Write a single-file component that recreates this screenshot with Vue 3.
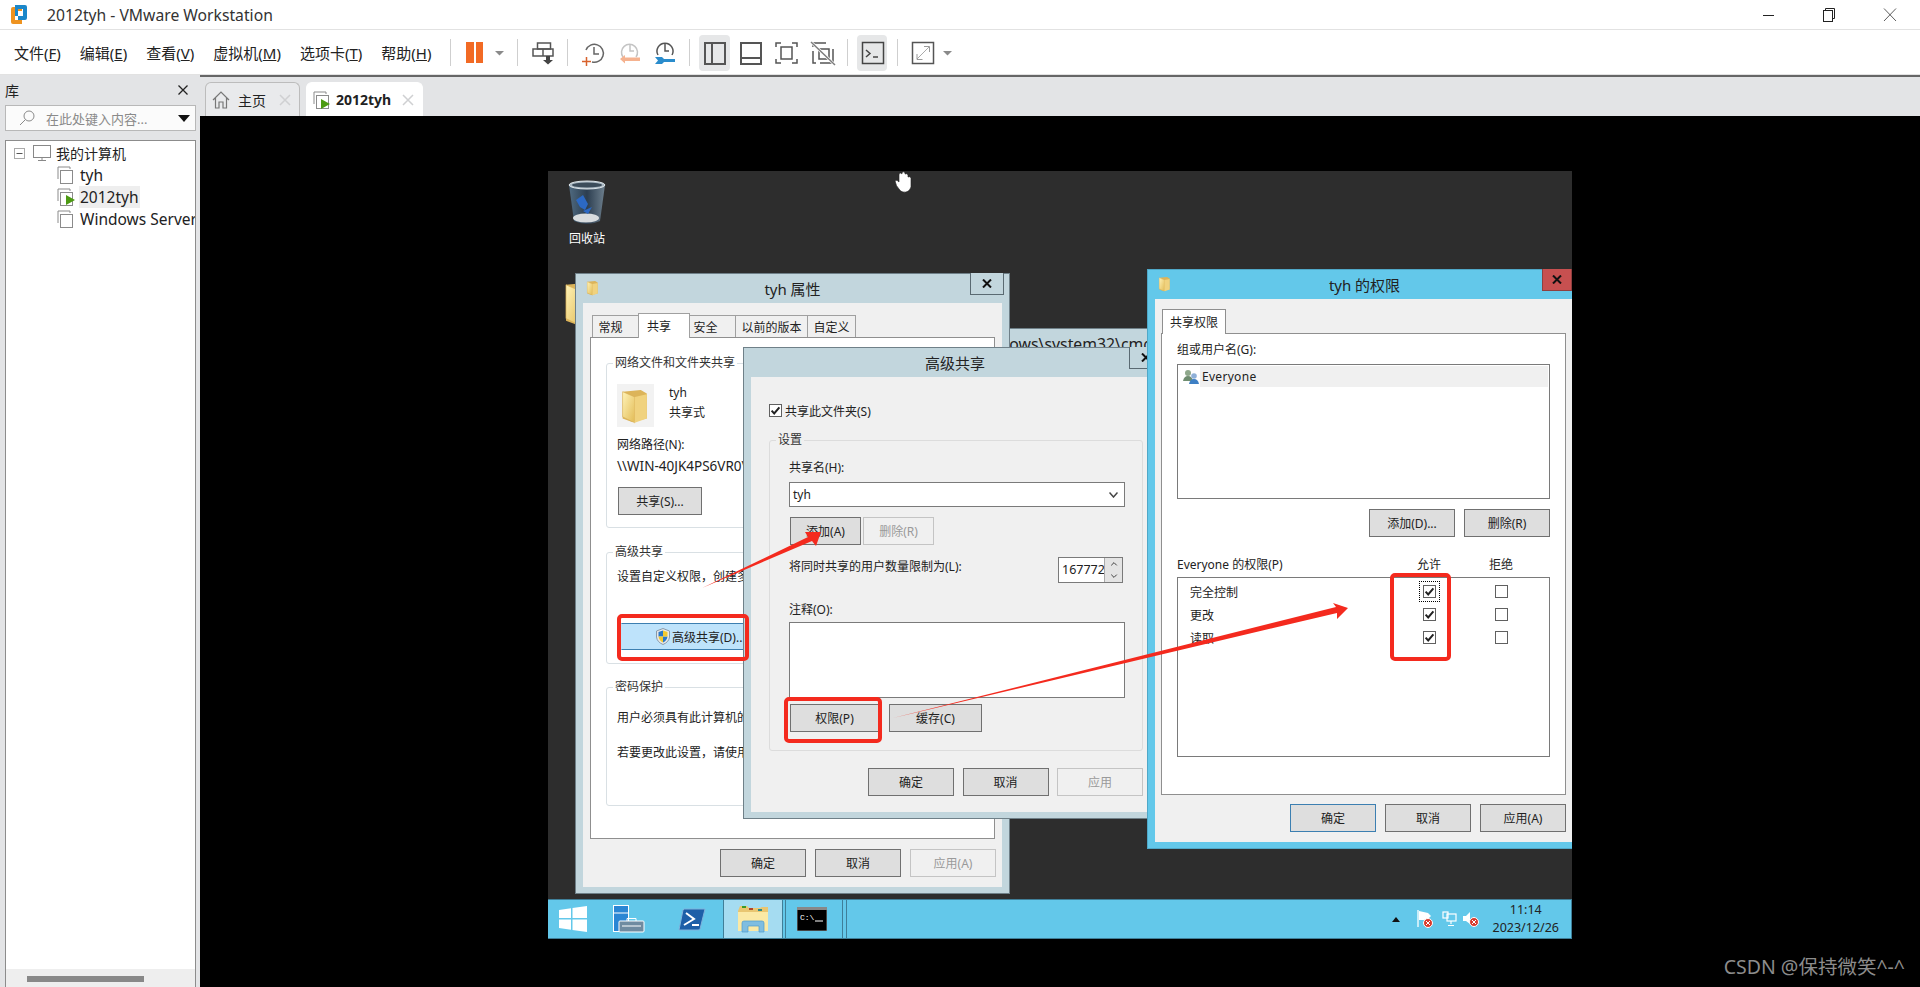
<script setup>
const menus = [
  ['文件', 'F'], ['编辑', 'E'], ['查看', 'V'], ['虚拟机', 'M'], ['选项卡', 'T'], ['帮助', 'H']
]
const tree = [
  { name: 'tyh' },
  { name: '2012tyh', running: true },
  { name: 'Windows Server 2012' }
]
const perms = [
  { name: '完全控制', focus: true },
  { name: '更改' },
  { name: '读取' }
]
</script>

<template>
  <div class="app">
    <!-- shared icon shapes -->
    <svg class="defs" width="0" height="0">
      <defs>
        <linearGradient id="fold" x1="0" y1="0" x2="1" y2="1">
          <stop offset="0" stop-color="#fff3b8" />
          <stop offset="1" stop-color="#e2bb55" />
        </linearGradient>
        <symbol id="folder" viewBox="0 0 37 43">
          <path d="M3 5 L24 3 L31 7 V36 L14 40 L3 36 Z" fill="#dcb45a" />
          <path d="M3 5 L17 11 V41 L3 34 Z" fill="url(#fold)" stroke="#d6ae55" stroke-width=".6" />
          <path d="M17 11 L31 8 V36 L17 41 Z" fill="#f0d27e" />
        </symbol>
        <symbol id="vm" viewBox="0 0 16 18">
          <path d="M1 13 V1 H13 V3" fill="none" stroke="#8b8b8b" />
          <rect x="3.5" y="4.5" width="12" height="13" fill="#fff" stroke="#8b8b8b" />
        </symbol>
        <symbol id="tick" viewBox="0 0 13 13">
          <path d="M2.6 6.6 L5.2 9.4 L10.4 3.4" fill="none" stroke="#222" stroke-width="2" />
        </symbol>
      </defs>
    </svg>

    <header class="titlebar">
      <svg class="logo" width="18" height="22" viewBox="0 0 18 22">
        <path d="M1 5 a2 2 0 0 1 2-2 H12 V7 H5 V16 H12 V20 H3 a2 2 0 0 1-2-2 Z" fill="#ee9320" />
        <path d="M5 1 H15 a2 2 0 0 1 2 2 V14 a2 2 0 0 1-2 2 H8 V12 H13 V5 H8 V12 H5 Z" fill="#1c87c9" />
      </svg>
      <span class="app-title">2012tyh - VMware Workstation</span>
      <div class="win-controls">
        <svg width="12" height="12" viewBox="0 0 12 12"><path d="M0 6.5 H11" stroke="#222" /></svg>
        <svg width="14" height="14" viewBox="0 0 14 14">
          <path d="M3.5 2.5 V0.5 H12.5 V10.5 H10.5" fill="none" stroke="#222" />
          <rect x="1.5" y="2.5" width="9" height="11" fill="#fff" stroke="#222" />
        </svg>
        <svg width="14" height="14" viewBox="0 0 14 14"><path d="M1 0.5 L13 13 M13 0.5 L1 13" stroke="#333" stroke-width=".8" /></svg>
      </div>
    </header>

    <nav class="toolbar">
      <div class="menus">
        <span v-for="m in menus" :key="m[0]">{{ m[0] }}(<u>{{ m[1] }}</u>)</span>
      </div>
      <svg class="tools" width="510" height="45" viewBox="450 29 510 45">
        <g stroke="#cfcfcf">
          <path d="M450.500 38 V65 M517.500 38 V65 M567.500 38 V65 M689.500 38 V65 M847.500 38 V65 M897.500 38 V65" />
        </g>
        <rect x="466" y="41" width="8" height="21" fill="#f26a24" />
        <rect x="476" y="41" width="7" height="21" fill="#f26a24" />
        <path d="M495 50 H504 L499.500 54.500 Z" fill="#8a8a8a" />
        <g fill="none" stroke="#555" stroke-width="1.5">
          <rect x="537.500" y="42" width="13" height="6" />
          <rect x="533" y="48" width="20" height="7" />
          <path d="M543 48 V55" />
        </g>
        <path d="M546 55 H550 V59 H553 L548 63.500 L543 59 H546 Z" fill="#444" />
        <g fill="none" stroke="#666" stroke-width="1.5">
          <path d="M586 49 A9 9 0 1 1 592 61" />
          <path d="M594 46 V53 H599" />
        </g>
        <path d="M586.500 56 V65 M582 60.500 H591" stroke="#d8622c" stroke-width="1.500" />
        <g fill="none" stroke="#c4c4c4" stroke-width="1.500">
          <path d="M623 56 A8 8 0 1 1 636 56" />
          <path d="M630 43 V50 H634" />
        </g>
        <path d="M620 58 L625 54 V56.500 H640 V60 H625 V62.500 Z" fill="#f5b28f" />
        <g fill="none" stroke="#555" stroke-width="1.500">
          <path d="M658 54 A8 8 0 1 1 672 54" />
          <path d="M665 43 V50 H669" />
        </g>
        <path d="M655 56 H662 L664 58 H675 V61 H664 L662 63 H655 L658 59.500 Z" fill="#2a8ccc" />

        <rect x="699" y="34" width="31" height="36" rx="4" fill="#e6e7e8" />
        <g fill="none" stroke="#555" stroke-width="2">
          <rect x="705" y="42" width="20" height="21" />
          <path d="M712 42 V63" />
          <rect x="741" y="42" width="20" height="21" />
          <path d="M741 57 H761" />
        </g>
        <g fill="none" stroke="#555" stroke-width="1.500">
          <path d="M776 46 V42 H781 M792 42 H797 V46 M797 58 V62 H792 M781 62 H776 V58" />
          <rect x="781" y="46" width="11" height="12" />
          <path d="M813 46 V42 H826 M833 48 V62 H820 M813 50 V62 H816" />
          <rect x="819" y="48" width="10" height="10" />
        </g>
        <path d="M811 41 L835 64" stroke="#fff" stroke-width="3" />
        <path d="M811 41 L835 64" stroke="#7d7d7d" stroke-width="1.500" />

        <rect x="857" y="34" width="30" height="36" rx="4" fill="#e6e7e8" />
        <rect x="862.500" y="41.500" width="21" height="21" fill="none" stroke="#444" stroke-width="1.500" />
        <path d="M866 49 L870 52.500 L866 56" fill="none" stroke="#444" stroke-width="1.500" />
        <path d="M873 56 H878" stroke="#444" stroke-width="1.500" />

        <rect x="912.500" y="41.500" width="21" height="21" fill="none" stroke="#555" stroke-width="1.500" />
        <path d="M917 58 L929 46" stroke="#aaa" />
        <path d="M924 45.500 H929.500 V51 M917 53 V58.500 H922.500" fill="none" stroke="#999" />
        <path d="M943 50 H952 L947.500 54.500 Z" fill="#8a8a8a" />
      </svg>
    </nav>

    <div class="main">
      <aside class="sidebar">
        <div class="side-head">
          <span>库</span>
          <svg width="10" height="10" viewBox="0 0 10 10"><path d="M.5 .5 L9.500 9.500 M9.500 .5 L.5 9.500" stroke="#222" stroke-width="1.300" /></svg>
        </div>
        <div class="search">
          <svg width="16" height="16" viewBox="0 0 16 16" fill="none" stroke="#8a8a8a">
            <circle cx="10" cy="6" r="5" /><path d="M6.500 9.500 L1 15" />
          </svg>
          <span class="search-text">在此处键入内容...</span>
          <span class="search-arrow"></span>
        </div>
        <div class="tree">
          <div class="tree-root">
            <svg class="tree-toggle" width="11" height="11" viewBox="0 0 11 11">
              <rect x=".5" y=".5" width="10" height="10" fill="none" stroke="#aaa" /><path d="M2.500 5.500 H8.500" stroke="#555" />
            </svg>
            <svg width="18" height="17" viewBox="0 0 18 17" fill="none" stroke="#888">
              <rect x=".5" y=".5" width="17" height="12" /><path d="M9 13 V15 M5 15.500 H13" />
            </svg>
            <span>我的计算机</span>
          </div>
          <div v-for="t in tree" :key="t.name" class="tree-row">
            <svg class="vm-icon" width="16" height="18"><use href="#vm" /></svg>
            <svg v-if="t.running" class="play" width="9" height="10" viewBox="0 0 9 10"><path d="M0 0 L9 5 L0 10 Z" fill="#4c9a12" /></svg>
            <span class="tree-name" :class="{ sel: t.running }">{{ t.name }}</span>
          </div>
          <div class="tree-scroll"><div class="tree-thumb"></div></div>
        </div>
      </aside>

      <section class="content">
        <div class="tabs">
          <div class="vtab">
            <svg width="18" height="20" viewBox="0 0 18 20" fill="none" stroke="#777" stroke-width="1.200">
              <path d="M1 10 L9 2 L17 10 M3.500 8 V18 H7 V12 H11 V18 H14.500 V8" />
            </svg>
            <span class="vtab-name">主页</span>
            <svg class="vtab-x" width="12" height="12" viewBox="0 0 12 12"><path d="M1 1 L11 11 M11 1 L1 11" stroke="#cfd0d2" stroke-width="1.500" /></svg>
          </div>
          <div class="vtab active">
            <span class="vtab-icon">
              <svg width="16" height="18"><use href="#vm" /></svg>
              <svg class="play" width="9" height="10" viewBox="0 0 9 10"><path d="M0 0 L9 5 L0 10 Z" fill="#4c9a12" /></svg>
            </span>
            <span class="vtab-name bold">2012tyh</span>
            <svg class="vtab-x" width="12" height="12" viewBox="0 0 12 12"><path d="M1 1 L11 11 M11 1 L1 11" stroke="#cfd0d2" stroke-width="1.500" /></svg>
          </div>
        </div>

        <div class="screen">
          <div class="guest">
            <div class="desk-icon">
              <svg width="38" height="46" viewBox="0 0 38 46">
                <defs>
                  <linearGradient id="glass" x1="0" x2="1">
                    <stop offset="0" stop-color="#4f6a80" /><stop offset=".5" stop-color="#2c3e50" /><stop offset="1" stop-color="#6d7f8d" />
                  </linearGradient>
                </defs>
                <path d="M1 5 L6 41 Q19 47 32 41 L37 5 Z" fill="url(#glass)" />
                <ellipse cx="19" cy="5" rx="18" ry="4" fill="#a9b7c1" stroke="#dfe6ea" />
                <ellipse cx="19" cy="5" rx="15" ry="2.500" fill="#3c4c5a" />
                <ellipse cx="18" cy="38" rx="13" ry="4.500" fill="#d8dcde" />
                <path d="M8 20 L15 15 L20 24 L17 30 L12 27 Z M15 31 L24 27 L20 34 Z" fill="#2c69c4" />
              </svg>
              <span>回收站</span>
            </div>
            <svg class="behind-folder" width="44" height="50"><use href="#folder" /></svg>

            <div class="cmd-back">C:\Windows\system32\cmd.exe</div>

            <!-- tyh 属性 -->
            <div class="win win-props">
              <div class="win-title">
                <svg class="win-folder" width="14" height="16"><use href="#folder" /></svg>
                <span>tyh 属性</span>
                <div class="win-close"><svg width="10" height="9" viewBox="0 0 10 9"><path d="M1 .5 L9 8.500 M9 .5 L1 8.500" stroke="#111" stroke-width="2" /></svg></div>
              </div>
              <div class="win-body">
                <div class="ptabs">
                  <span class="ptab pt1">常规</span>
                  <span class="ptab pt2 on">共享</span>
                  <span class="ptab pt3">安全</span>
                  <span class="ptab pt4">以前的版本</span>
                  <span class="ptab pt5">自定义</span>
                </div>
                <div class="ppanel">
                  <div class="group g1">
                    <span class="legend">网络文件和文件夹共享</span>
                    <div class="share-row">
                      <div class="share-icon"><svg width="32" height="38"><use href="#folder" /></svg></div>
                      <div class="share-text"><div>tyh</div><div>共享式</div></div>
                    </div>
                    <div class="path-label">网络路径(N):</div>
                    <div class="path-value">\\WIN-40JK4PS6VR0\tyh</div>
                    <button class="btn share-btn">共享(S)...</button>
                  </div>
                  <div class="group g2">
                    <span class="legend">高级共享</span>
                    <div class="gtext">设置自定义权限，创建多个共享，并设置其他高级共享选项。</div>
                    <button class="adv-btn">
                      <svg width="14" height="17" viewBox="0 0 14 17">
                        <path d="M7 .5 L13.500 3 V9 Q13 14 7 16.500 Q1 14 .5 9 V3 Z" fill="#e8e8e8" stroke="#8a9aa8" />
                        <path d="M7 2.500 V8.500 H2.500 V4 Z M7 8.500 H11.500 Q11 12.500 7 14.500 Z" fill="#2a78c8" />
                        <path d="M7 2.500 L11.500 4 V8.500 H7 Z M7 8.500 V14.500 Q3 12.500 2.500 8.500 Z" fill="#f2c92f" />
                      </svg>
                      <span>高级共享(D)...</span>
                    </button>
                  </div>
                  <div class="group g3">
                    <span class="legend">密码保护</span>
                    <div class="gtext">用户必须具有此计算机的用户帐户和密码，才能访问共享文件夹。</div>
                    <div class="gtext second">若要更改此设置，请使用网络和共享中心。</div>
                  </div>
                </div>
                <div class="actions props-actions">
                  <button class="btn">确定</button>
                  <button class="btn">取消</button>
                  <button class="btn off">应用(A)</button>
                </div>
              </div>
            </div>

            <!-- 高级共享 -->
            <div class="win win-adv">
              <div class="win-title">
                <span class="adv-title">高级共享</span>
                <div class="win-close"><svg width="10" height="9" viewBox="0 0 10 9"><path d="M1 .5 L9 8.500 M9 .5 L1 8.500" stroke="#111" stroke-width="2" /></svg></div>
              </div>
              <div class="win-body adv-body">
                <label class="check-row">
                  <span class="chk"><svg width="13" height="13"><use href="#tick" /></svg></span>
                  <span>共享此文件夹(S)</span>
                </label>
                <div class="group settings">
                  <span class="legend grey">设置</span>
                  <div class="f-label first">共享名(H):</div>
                  <div class="select">
                    <span>tyh</span>
                    <svg width="9" height="6" viewBox="0 0 9 6"><path d="M.5 .5 L4.500 5 L8.500 .5" fill="none" stroke="#444" stroke-width="1.500" /></svg>
                  </div>
                  <div class="add-row">
                    <button class="btn add">添加(A)</button>
                    <button class="btn add off">删除(R)</button>
                  </div>
                  <div class="limit-row">
                    <span class="limit-label">将同时共享的用户数量限制为(L):</span>
                    <div class="spin">
                      <span class="spin-val">167772</span>
                      <div class="spin-btns">
                        <svg width="18" height="13" viewBox="0 0 18 13"><path d="M6 8 L9 5 L12 8" fill="none" stroke="#333" /></svg>
                        <svg width="18" height="13" viewBox="0 0 18 13"><path d="M6 5 L9 8 L12 5" fill="none" stroke="#333" /></svg>
                      </div>
                    </div>
                  </div>
                  <div class="f-label note">注释(O):</div>
                  <div class="note-box"></div>
                  <div class="perm-row">
                    <button class="btn perm">权限(P)</button>
                    <button class="btn cache">缓存(C)</button>
                  </div>
                </div>
                <div class="actions adv-actions">
                  <button class="btn">确定</button>
                  <button class="btn">取消</button>
                  <button class="btn off">应用</button>
                </div>
              </div>
            </div>

            <!-- tyh 的权限 -->
            <div class="win win-perm">
              <div class="win-title">
                <svg class="win-folder" width="14" height="16"><use href="#folder" /></svg>
                <span>tyh 的权限</span>
                <div class="win-close red"><svg width="10" height="9" viewBox="0 0 10 9"><path d="M1 .5 L9 8.500 M9 .5 L1 8.500" stroke="#111" stroke-width="2" /></svg></div>
              </div>
              <div class="win-body perm-body">
                <div class="ptab-single">共享权限</div>
                <div class="perm-panel">
                  <div class="f-label">组或用户名(G):</div>
                  <div class="user-list">
                    <div class="user-row">
                      <svg width="16" height="16" viewBox="0 0 16 16">
                        <circle cx="5" cy="4" r="3" fill="#8fa88c" /><path d="M0 12 Q1 7 5 7 Q9 7 10 12 Z" fill="#6f8d70" />
                        <circle cx="11" cy="7" r="2.800" fill="#8fb0d8" /><path d="M6 15 Q7 10 11 10 Q15 10 16 15 Z" fill="#3e7fc4" />
                      </svg>
                      <span class="user-name">Everyone</span>
                    </div>
                  </div>
                  <div class="actions list-actions">
                    <button class="btn">添加(D)...</button>
                    <button class="btn">删除(R)</button>
                  </div>
                  <div class="perm-grid perm-head">
                    <span>Everyone 的权限(P)</span>
                    <span class="mid">允许</span>
                    <span class="mid">拒绝</span>
                  </div>
                  <div class="perm-list">
                    <div v-for="p in perms" :key="p.name" class="perm-grid perm-item">
                      <span class="perm-name">{{ p.name }}</span>
                      <span class="mid"><span class="chk" :class="{ focus: p.focus }"><svg width="13" height="13"><use href="#tick" /></svg></span></span>
                      <span class="mid"><span class="chk"></span></span>
                    </div>
                  </div>
                </div>
                <div class="actions perm-actions">
                  <button class="btn def">确定</button>
                  <button class="btn">取消</button>
                  <button class="btn">应用(A)</button>
                </div>
              </div>
            </div>

            <!-- red marks drawn over the screenshot -->
            <svg class="marks" width="1024" height="768" viewBox="548 171 1024 768">
              <g fill="none" stroke="#f42a1e" stroke-width="4">
                <rect x="619" y="616" width="128" height="43" rx="3" />
                <rect x="786" y="699" width="94" height="42" rx="3" />
                <rect x="1392" y="575" width="57" height="84" rx="3" />
              </g>
              <g fill="#f42a1e">
                <polygon points="702,588 808,537 805,532 821,532 816,546 812,541" />
                <polygon points="893,718 1336,607 1333,603 1348,608 1337,619 1337,613" />
              </g>
              <path d="M899 189 Q896 186 895 181 Q897 179 899 182 V174 Q901 172 902 174 V172.500 Q904 171 905 173 V174 Q907 173 908 175 V177 Q910 176 911 178 V187 Q909 193 903 192 Q901 192 899 189 Z" fill="#fff" stroke="#222" stroke-width=".6" />
            </svg>

            <footer class="taskbar">
              <div class="task-slot start">
                <svg width="28" height="26" viewBox="0 0 28 26" fill="#fff">
                  <path d="M0 4 L12 2.200 V12 H0 Z M13.500 2 L28 0 V12 H13.500 Z M0 13.500 H12 V23.800 L0 22 Z M13.500 13.500 H28 V26 L13.500 24 Z" />
                </svg>
              </div>
              <div class="task-slot server">
                <svg width="32" height="28" viewBox="0 0 32 28">
                  <rect x=".5" y=".5" width="15" height="26" fill="#2a86d4" stroke="#fff" />
                  <path d="M1 8 H15" stroke="#fff" />
                  <rect x="6" y="16" width="25" height="11" rx="1" fill="#6f8ba0" stroke="#fff" />
                  <path d="M14 16 V13.500 H23 V16 M9 21 H28" fill="none" stroke="#fff" />
                </svg>
              </div>
              <div class="task-slot ps">
                <svg width="28" height="23" viewBox="0 0 28 23">
                  <path d="M6 1 H27 L22 21 Q22 22 20 22 H1 L5 2 Z" fill="#1d5fa8" stroke="#7fb2dc" />
                  <path d="M8 5 L16 11 L6 17 M14 17 H21" fill="none" stroke="#fff" stroke-width="2" />
                </svg>
              </div>
              <div class="task-slot explorer">
                <svg width="32" height="28" viewBox="0 0 32 28">
                  <path d="M1 6 L3 1 H10 L12 3 H23 L25 2 H31 V26 H1 Z" fill="#e9c671" />
                  <rect x="5" y="1" width="4" height="2" fill="#3a9a2a" /><rect x="12" y="3" width="4" height="2" fill="#b2452a" /><rect x="21" y="4" width="4" height="2" fill="#2a8a8a" />
                  <rect x="1" y="7" width="30" height="19" fill="#fbe9a5" />
                  <path d="M5 27 V18 Q5 16 7 16 H25 Q27 16 27 18 V27 H22 V21 H11 V27 Z" fill="#7fbde0" stroke="#4f9ccc" stroke-width=".7" />
                </svg>
              </div>
              <div class="task-slot cmd">
                <svg width="30" height="24" viewBox="0 0 30 24">
                  <rect width="30" height="24" fill="#000" stroke="#8a8a8a" />
                  <rect x="0" y="0" width="30" height="3" fill="#888" />
                  <text x="3" y="13" fill="#fff" font-size="8" font-family="Liberation Mono, monospace">C:\</text>
                  <path d="M18 14 H26" stroke="#fff" />
                </svg>
              </div>
              <div class="task-gap"></div>
              <div class="tray">
                <span class="tray-up"></span>
                <svg width="16" height="18" viewBox="0 0 16 18">
                  <path d="M1 0 V17" stroke="#fff" stroke-width="1.300" /><path d="M2 1 L11 3 L14 6 L10 10 H2 Z" fill="#fff" />
                  <circle cx="11" cy="13" r="4.500" fill="#d83a2c" stroke="#fff" /><path d="M9 11 L13 15 M13 11 L9 15" stroke="#fff" />
                </svg>
                <svg width="15" height="16" viewBox="0 0 15 16" fill="none" stroke="#fff" stroke-width="1.200">
                  <rect x="1" y="1" width="5" height="6" /><rect x="5" y="3" width="9" height="7" /><path d="M9 10 V13 M6 14.500 H12" />
                </svg>
                <svg class="tray-sound" width="17" height="16" viewBox="0 0 17 16">
                  <path d="M1 5 H4 L8 1 V13 L4 10 H1 Z" fill="#fff" /><circle cx="12" cy="11" r="4.500" fill="#d83a2c" stroke="#fff" />
                  <path d="M10 9 L14 13 M14 9 L10 13" stroke="#fff" />
                </svg>
                <div class="clock"><div>11:14</div><div>2023/12/26</div></div>
              </div>
            </footer>
          </div>
          <span class="watermark">CSDN @保持微笑^-^</span>
        </div>
      </section>
    </div>
  </div>
</template>

<style>
html, body { margin: 0; background: #000; overflow: hidden; }
</style>

<style scoped>
* { box-sizing: border-box; }
.app {
  width: 1920px;
  height: 987px;
  display: flex;
  flex-direction: column;
  overflow: hidden;
  background: #fff;
  color: #222;
  font-family: "Noto Sans", "Noto Sans CJK SC", sans-serif;
}
.defs { position: absolute; }

.titlebar { height: 29px; display: flex; align-items: center; padding-left: 10px; flex: none; }
.logo { flex: none; }
.app-title { margin-left: 19px; font-size: 15.7px; color: #333; }
.win-controls { margin-left: auto; display: flex; align-items: center; gap: 47px; padding-right: 23px; }

.toolbar {
  height: 46px;
  flex: none;
  display: flex;
  align-items: center;
  padding-left: 14px;
  border-top: 1px solid #e2e2e2;
  border-bottom: 1px solid #e2e2e2;
}
.menus { display: flex; gap: 19px; width: 422px; font-size: 15px; color: #222; white-space: nowrap; }
.tools { margin-left: 14px; flex: none; }

.main { flex: 1; display: flex; min-height: 0; }

.sidebar {
  width: 200px;
  flex: none;
  background: #e3e4e6;
  display: flex;
  flex-direction: column;
  padding: 0 4px 0 5px;
}
.side-head { height: 30px; flex: none; display: flex; align-items: center; justify-content: space-between; padding: 0 8px 0 0; font-size: 14px; }
.search {
  height: 26px;
  flex: none;
  background: #fbfbfb;
  border: 1px solid #b8b8b8;
  display: flex;
  align-items: center;
  padding-left: 13px;
  font-size: 13px;
  color: #8a8a8a;
}
.search-text { margin-left: 11px; white-space: nowrap; }
.search-arrow {
  margin-left: auto;
  margin-right: 5px;
  border-left: 6px solid transparent;
  border-right: 6px solid transparent;
  border-top: 7px solid #111;
}
.tree {
  margin-top: 9px;
  flex: 1;
  min-height: 0;
  background: #fff;
  border: 1px solid #8c8c8c;
  border-bottom: none;
  display: flex;
  flex-direction: column;
  font-size: 15.5px;
  color: #222;
  overflow: hidden;
}
.tree-root { height: 22px; margin-top: 1px; display: flex; align-items: center; padding-left: 8px; flex: none; }
.tree-toggle { margin-right: 8px; }
.tree-root span { margin-left: 5px; font-size: 14px; white-space: nowrap; }
.tree-row { height: 22px; position: relative; display: flex; align-items: center; padding-left: 51px; flex: none; white-space: nowrap; }
.vm-icon { flex: none; }
.play { position: absolute; left: 60px; top: 9px; }
.tree-name { margin-left: 6px; padding: 0 1px; line-height: 22px; }
.tree-name.sel { background: #eee; }
.tree-scroll { margin-top: auto; height: 18px; background: #eee; flex: none; padding-top: 7px; padding-left: 21px; }
.tree-thumb { width: 117px; height: 6px; background: #888; }

.content { flex: 1; display: flex; flex-direction: column; min-width: 0; }
.tabs {
  height: 41px;
  flex: none;
  background: #e3e4e6;
  border-top: 2px solid #666;
  display: flex;
  align-items: flex-end;
  padding-left: 5px;
  gap: 6px;
  font-size: 14px;
}
.vtab {
  width: 95px;
  height: 34px;
  border: 1px solid #bcbcbc;
  border-bottom: none;
  border-radius: 6px 6px 0 0;
  background: #e9eaec;
  display: flex;
  align-items: center;
  padding-left: 6px;
}
.vtab.active { width: 117px; background: #fff; border-color: #fff; }
.vtab-name { margin-left: 8px; white-space: nowrap; }
.vtab-name.bold { font-weight: 700; margin-left: 7px; }
.vtab-x { margin-left: auto; margin-right: 8px; }
.vtab-icon { position: relative; display: flex; }
.vtab-icon .play { left: 8px; top: 8px; }

.screen { flex: 1; background: #000; position: relative; padding: 55px 0 0 348px; }
.watermark { position: absolute; right: 15px; bottom: 7px; color: #8c8c8c; font-size: 19.5px; }

.guest {
  width: 1024px;
  height: 768px;
  background: #2d2d2d;
  position: relative;
  overflow: hidden;
  display: flex;
  flex-direction: column;
  font-size: 12px;
  color: #222;
}
.desk-icon {
  position: absolute;
  left: 20px;
  top: 9px;
  display: flex;
  flex-direction: column;
  align-items: center;
  color: #fff;
  gap: 3px;
}
.behind-folder { position: absolute; left: 14px; top: 108px; }
.cmd-back {
  position: absolute;
  left: 252px;
  top: 157px;
  width: 360px;
  height: 50px;
  background: #c2d6dd;
  border: 1px solid #6f8088;
  padding: 5px 0 0 150px;
  font-size: 15.8px;
  line-height: 20px;
  white-space: nowrap;
  overflow: hidden;
}

.win {
  position: absolute;
  background: #c2d6dd;
  border: 1px solid #6f8088;
  display: flex;
  flex-direction: column;
  padding: 0 7px 6px;
}
.win-title {
  height: 29px;
  flex: none;
  position: relative;
  display: flex;
  align-items: center;
  justify-content: center;
  font-size: 15px;
  color: #222;
}
.win-folder { position: absolute; left: 3px; top: 6px; }
.win-close {
  position: absolute;
  right: -2px;
  top: -1px;
  width: 34px;
  height: 22px;
  border: 1px solid #5a6a72;
  border-top: none;
  display: flex;
  align-items: center;
  justify-content: center;
  background: #c2d6dd;
}
.win-body { flex: 1; background: #f0f0f0; min-height: 0; }

.win-props { left: 27px; top: 102px; width: 435px; height: 621px; }
.win-props .win-body { padding: 12px 7px 0 7px; }
.ptabs { display: flex; height: 22px; align-items: flex-end; }
.ptab {
  height: 22px;
  display: flex;
  align-items: center;
  justify-content: center;
  background: #f0f0f0;
  border: 1px solid #a0a0a0;
  border-bottom: none;
  white-space: nowrap;
}
.pt1 { width: 46px; margin-left: 2px; border-right: none; padding-right: 10px; }
.pt2 { width: 52px; height: 25px; background: #fff; position: relative; z-index: 1; margin-bottom: -1px; align-items: flex-start; padding: 3px 10px 0 0; }
.pt3 { width: 46px; border-left: none; padding-right: 14px; }
.pt4 { width: 72px; border-left: none; }
.pt5 { width: 48px; border-left: none; }
.ppanel { height: 502px; background: #fff; border: 1px solid #8f8f8f; padding: 0 14px 0 15px; }
.group { position: relative; border: 1px solid #d9e0e4; border-radius: 3px; }
.legend { position: absolute; left: 6px; top: -9px; line-height: 16px; background: #fff; padding: 0 2px; white-space: nowrap; color: #333; }
.legend.grey { background: #f0f0f0; }
.g1 { margin-top: 25px; height: 165px; padding: 20px 0 0 10px; }
.g2 { margin-top: 24px; height: 112px; padding: 14px 0 0 10px; }
.g3 { margin-top: 23px; height: 119px; padding: 20px 0 0 10px; }
.share-row { display: flex; gap: 15px; height: 43px; }
.share-icon { width: 37px; height: 43px; background: #f2f2f2; display: flex; align-items: center; justify-content: center; }
.share-text { line-height: 20px; margin-top: -1px; }
.path-label { margin-top: 8px; line-height: 20px; }
.path-value { margin-top: 1px; line-height: 20px; white-space: nowrap; font-size: 13.5px; }
.gtext { line-height: 20px; white-space: nowrap; }
.gtext.second { margin-top: 15px; }

.btn {
  width: 86px;
  height: 28px;
  padding: 0;
  background: #dedede;
  border: 1px solid #707070;
  font: inherit;
  color: #222;
  white-space: nowrap;
  display: block;
}
.btn.off { background: #f0f0f0; border-color: #c4c4c4; color: #9a9a9a; }
.btn.def { border-color: #3c7fb1; }
.share-btn { width: 84px; margin: 11px 0 0 1px; }
.adv-btn {
  margin: 36px 0 0 4px;
  width: 150px;
  height: 27px;
  background: #bee3fb;
  border: 1px solid #3c7fb1;
  border-left-color: #bee3fb;
  display: flex;
  align-items: center;
  gap: 2px;
  padding: 0 0 0 34px;
  font: inherit;
  color: #222;
  white-space: nowrap;
}
.actions { display: flex; justify-content: flex-end; gap: 9px; }
.props-actions { margin-top: 10px; width: 406px; }

.win-adv { left: 195px; top: 176px; width: 420px; height: 472px; }
.win-adv .win-close { right: -8px; }
.adv-title { padding-left: 4px; }
.adv-body { padding: 27px 0 0 18px; }
.check-row { display: flex; align-items: center; gap: 3px; height: 13px; white-space: nowrap; }
.chk {
  width: 13px;
  height: 13px;
  flex: none;
  display: inline-flex;
  background: #fff;
  border: 1px solid #606060;
  position: relative;
}
.chk svg { margin: -1px; flex: none; }
.chk.focus { outline: 1px dotted #000; outline-offset: 3px; }
.settings {
  margin-top: 23px;
  width: 374px;
  height: 311px;
  padding: 19px 0 0 19px;
  border-color: #dcdcdc;
}
.f-label { line-height: 16px; }
.select {
  margin-top: 6px;
  width: 336px;
  height: 25px;
  background: #fff;
  border: 1px solid #7a7a7a;
  display: flex;
  align-items: center;
  justify-content: space-between;
  padding: 0 6px 0 3px;
}
.add-row { margin: 10px 0 0 1px; display: flex; gap: 2px; }
.btn.add { width: 71px; }
.limit-row { margin-top: 12px; width: 334px; height: 26px; display: flex; justify-content: space-between; align-items: center; }
.limit-label { margin-bottom: 8px; }
.spin { width: 65px; height: 26px; background: #fff; border: 1px solid #7a7a7a; display: flex; font-size: 12.500px; }
.spin-val { flex: 1; line-height: 24px; padding-left: 3px; }
.spin-btns { width: 18px; background: #e4e4e4; border-left: 1px solid #aaa; display: flex; flex-direction: column; flex: none; margin-left: -1px; }
.f-label.note { margin-top: 19px; }
.note-box { margin-top: 4px; width: 336px; height: 76px; background: #fff; border: 1px solid #7a7a7a; }
.perm-row { margin: 6px 0 0 1px; display: flex; gap: 10px; }
.btn.perm { width: 89px; }
.btn.cache { width: 93px; }
.adv-actions { margin-top: 17px; width: 374px; gap: 8.5px; }

.win-perm { left: 599px; top: 98px; width: 428px; height: 580px; background: #63c8ea; border-color: #4fa8c8; padding-right: 0; }
.win-perm .win-close { right: 2px; width: 30px; }
.win-close.red { background: #c75050; border-color: #8f4040; }
.perm-body { padding: 10px 0 0 6px; }
.ptab-single {
  width: 64px;
  height: 25px;
  margin-left: 1px;
  background: #fff;
  border: 1px solid #8f8f8f;
  border-bottom: none;
  display: flex;
  align-items: center;
  justify-content: center;
  position: relative;
  margin-bottom: -1px;
  z-index: 1;
}
.perm-panel { width: 405px; height: 462px; background: #fff; border: 1px solid #8f8f8f; padding: 8px 0 0 15px; }
.user-list { margin-top: 6px; width: 373px; height: 135px; border: 1px solid #7a7a7a; padding: 1px 1px 0 5px; }
.user-row { display: flex; align-items: center; height: 21px; }
.user-name { flex: 1; margin-left: 1px; padding-left: 2px; line-height: 21px; background: #f0f0f0; letter-spacing: .3px; }
.list-actions { margin-top: 10px; width: 373px; }
.perm-grid { display: grid; grid-template-columns: 216px 72px 72px; }
.perm-head { margin-top: 20px; line-height: 16px; width: 373px; }
.mid { display: flex; justify-content: center; align-items: center; }
.perm-list { margin-top: 4px; width: 373px; height: 180px; border: 1px solid #7a7a7a; padding-top: 2px; }
.perm-item { height: 23px; align-items: center; margin-left: -1px; }
.perm-name { padding-left: 13px; }
.perm-actions { margin-top: 9px; width: 405px; }

.marks { position: absolute; left: 0; top: 0; z-index: 5; pointer-events: none; }

.taskbar {
  margin-top: auto;
  height: 40px;
  flex: none;
  background: #63c8ea;
  border: 1px solid #3f7f99;
  border-left: none;
  display: flex;
  align-items: center;
  position: relative;
  z-index: 3;
}
.task-slot { height: 38px; display: flex; align-items: center; justify-content: center; flex: none; }
.task-slot.start { width: 52px; padding-left: 11px; justify-content: flex-start; }
.task-slot.server { width: 60px; padding-left: 13px; justify-content: flex-start; }
.task-slot.ps { width: 63px; padding-left: 18px; justify-content: flex-start; }
.task-slot.explorer { width: 60px; background: #a5dcf1; border-left: 1px solid #3f7f99; border-right: 1px solid #3f7f99; }
.task-slot.cmd { width: 57px; margin-left: 2px; border-left: 1px solid #3f7f99; padding-right: 4px; }
.task-gap { width: 5px; height: 38px; border-left: 1px solid #3f7f99; border-right: 1px solid #3f7f99; }
.tray { margin-left: auto; display: flex; align-items: center; padding-right: 12px; gap: 9px; }
.tray-up { border-left: 4px solid transparent; border-right: 4px solid transparent; border-bottom: 5px solid #111; margin-right: 8px; }
.tray-sound { margin-left: -4px; }
.clock { margin-left: 4px; text-align: center; line-height: 18px; font-size: 12.5px; }
</style>
